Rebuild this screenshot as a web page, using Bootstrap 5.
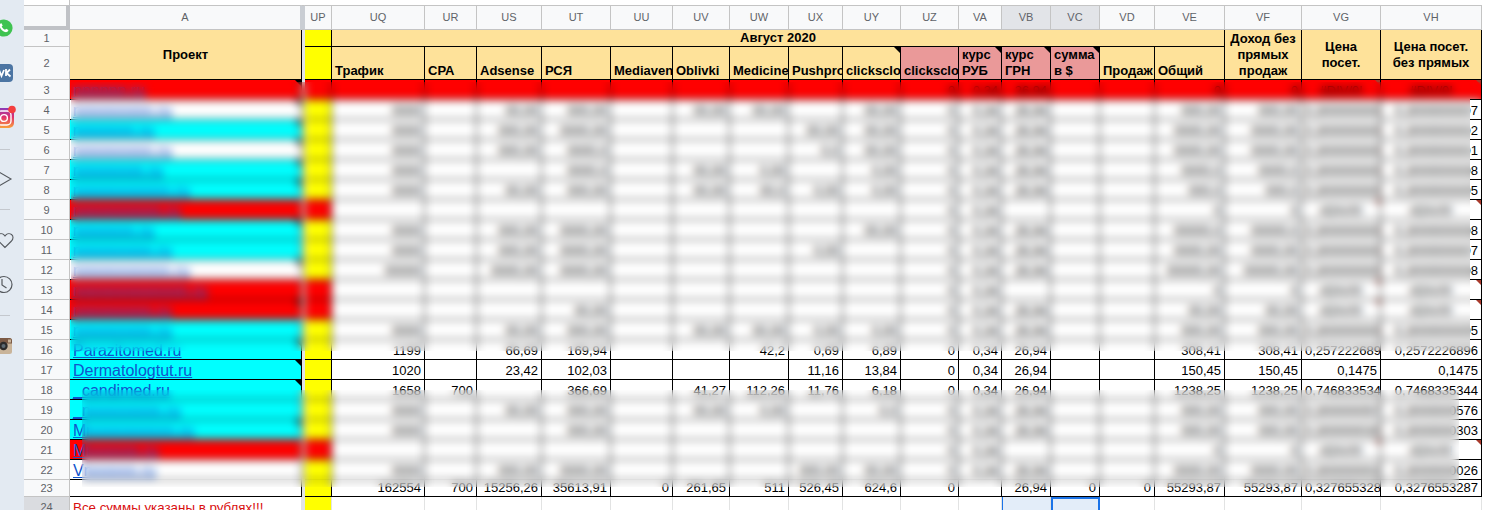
<!DOCTYPE html>
<html lang="ru">
<head>
<meta charset="utf-8">
<title>Таблица проектов</title>
<link href="https://cdn.jsdelivr.net/npm/bootstrap@5.3.0/dist/css/bootstrap.min.css" rel="stylesheet">
<style>
html,body{height:510px;overflow:hidden;background:#fff}
.stage{height:510px;width:1487px;overflow:hidden}
.rail{width:24px;background:#e3eaf2;flex:none}
.rail svg{display:block}
.tick{width:46px;height:5px;border-right:1px solid #c4c4c4}
.sheet{table-layout:fixed;width:1458px;border-collapse:separate;border-spacing:0;font:13px/16px "Liberation Sans",Arial,sans-serif;color:#000}
.sheet td,.sheet th{padding:0 3px;overflow:hidden;white-space:nowrap;vertical-align:bottom;position:relative}
.sheet thead th{height:25px;font:11px/23px "Liberation Sans",Arial,sans-serif;color:#5f6368;background:#f8f9fa;text-align:center;vertical-align:middle;border-top:1px solid #c4c4c4;border-bottom:1px solid #c4c4c4;border-right:1px solid #c4c4c4;padding:0}
.sheet thead th.corner{border-right:4px solid #c0c2c6;border-bottom:4px solid #c0c2c6}
.sheet thead th.colA{border-right:2px solid #c9cdd3}
.sheet thead th.frz{background:#c9cdd3;border-right-color:#c9cdd3}
.sheet thead th.pick{background:#e2e4e8}
.sheet tbody th{font:11px/16px "Liberation Sans",Arial,sans-serif;color:#5f6368;background:#f8f9fa;text-align:center;vertical-align:middle;border-right:1px solid #c4c4c4;border-bottom:1px solid #c4c4c4;padding:0}
.sheet tbody tr{height:20px}
.sheet tbody td{border-right:1px solid #000;border-bottom:1px solid #000;text-align:right;background:#fff}
.sheet tbody tr.r1{height:17px}
.sheet tbody tr.r2{height:33px}
.sheet tbody tr.r23{height:17px}
.sheet tbody td.hd{background:#fee29a;font-weight:700;text-align:left}
.sheet tbody td.ctr{text-align:center;vertical-align:middle;white-space:normal}
.sheet tbody td.pk{background:#ea9999;white-space:normal}
.sheet tbody td.pj{text-align:left;font-size:16px;background:#fff}
.sheet tbody td.pj a{color:#1155cc}
.sheet tbody tr .cy{background:#0ff}
.sheet tbody tr .rd{background:#f00}
.sheet tbody td.up{background:#ff0}
.sheet tbody td.up.rd{background:#f00}
.sheet tbody td.gp{background:#e1e3e7;border:0;padding:0}
.sheet tbody td.er{text-align:center}
.sheet tbody tr.rrow td:not(.gp){background:#f00}
.sheet tbody tr.last td{border-color:#e2e3e3;height:20px}
.sheet tbody tr.last td.up{background:#ff0}
.sheet tbody tr.last th{background:#dadce0}
.sheet tbody tr.last td.note{text-align:left;color:#d90f0f;background:#fff;font-size:13.33px}
.sheet tbody tr.last td.sel1{background:#e3edf9;border-left:1px solid #1a73e8}
.sheet tbody tr.last td.sel2{background:#e3edf9;border:2px solid #1a73e8}
.nt::after,.er::after{content:"";position:absolute;top:0;right:0;border-style:solid;border-width:0 6px 6px 0;border-color:transparent #000 transparent transparent}
.er::after{border-width:0 5px 5px 0;border-color:transparent #a83a2c transparent transparent}
.veil{position:absolute;backdrop-filter:blur(4px);-webkit-backdrop-filter:blur(4px)}
.veil-top{left:71px;top:82px;width:1410px;height:269px;clip-path:polygon(0 0,100% 0,100% 17px,1399px 17px,1399px 100%,0 100%)}
.veil-low{left:82px;top:390px;width:1377px;height:97px}
</style>
</head>
<body>
<div class="stage d-flex position-relative">
<aside class="rail">
<svg width="24" height="510" viewBox="0 0 24 510" aria-hidden="true">
<circle cx="4" cy="28" r="8.6" fill="#3fc351"/>
<path d="M0.6 23.5c-1 .6-1.4 2-.9 3.3.9 2.4 2.7 4.3 5.2 5.2 1.3.4 2.6 0 3.2-1l.3-.9-2.3-1.3-1 1c-1.500-.5-2.800-1.800-3.400-3.300l1-1-1.200-2.300z" fill="#fff"/>
<rect x="-6" y="64" width="19" height="18" rx="4" fill="#4c75a3"/>
<path d="M-1 70l2.500 6 2.500-6" fill="none" stroke="#fff" stroke-width="1.800"/>
<path d="M6 69v7M6.500 73l3.500-3.500M6.500 73l4 3.500" fill="none" stroke="#fff" stroke-width="1.800"/>
<defs><linearGradient id="ig" x1="0" y1="0" x2="0" y2="1"><stop offset="0" stop-color="#8a3ab9"/><stop offset=".45" stop-color="#e1306c"/><stop offset="1" stop-color="#f9a13b"/></linearGradient></defs>
<rect x="-6" y="108" width="20" height="20" rx="5" fill="url(#ig)"/>
<rect x="-3" y="111" width="14" height="14" rx="4" fill="none" stroke="#fff" stroke-width="1.400"/>
<circle cx="4" cy="118" r="3.400" fill="none" stroke="#fff" stroke-width="1.400"/>
<circle cx="12" cy="109.500" r="3.800" fill="#f43f3f"/>
<path d="M0 149.500h10M0 209.500h10M0 315.500h10" stroke="#c4c8ce"/>
<path d="M-1 172l12 7-12 7" fill="none" stroke="#55595e" stroke-width="1.100"/>
<path d="M5 247.500l-6.500-6.500c-2-2.200-2-5 0-6.500 2-1.400 4.800-.8 6.500 1.500 1.700-2.300 4.500-2.900 6.500-1.500 2 1.500 2 4.300 0 6.500z" fill="none" stroke="#55595e" stroke-width="1.100"/>
<circle cx="4" cy="284.500" r="8" fill="none" stroke="#55595e" stroke-width="1.200"/>
<path d="M2 279v6l4.500 3" fill="none" stroke="#55595e" stroke-width="1.200"/>
<rect x="-5" y="338" width="17" height="16" rx="2.500" fill="#c9b49a"/>
<path d="M-5 340.500a2.500 2.500 0 0 1 2.500-2.500h12a2.500 2.500 0 0 1 2.500 2.500v3h-17z" fill="#7b5a45"/>
<circle cx="3.500" cy="346" r="4.200" fill="#2b2b2b"/>
<circle cx="3.500" cy="346" r="2" fill="#5d6a72"/>
<rect x="8" y="339.500" width="3" height="3" fill="#c9b49a"/>
</svg>
</aside>
<main class="flex-grow-1">
<div class="tick"></div>
<table class="sheet">
<colgroup>
<col style="width:46px"><col style="width:232px"><col style="width:3px"><col style="width:27px"><col style="width:93px"><col style="width:52px"><col style="width:65px"><col style="width:69px"><col style="width:62px"><col style="width:57px"><col style="width:59px"><col style="width:54px"><col style="width:58px"><col style="width:58px"><col style="width:43px"><col style="width:49px"><col style="width:49px"><col style="width:55px"><col style="width:70px"><col style="width:77px"><col style="width:79px"><col style="width:101px">
</colgroup>
<thead><tr><th class="corner"></th><th class="colA">A</th><th class="frz"></th><th>UP</th><th>UQ</th><th>UR</th><th>US</th><th>UT</th><th>UU</th><th>UV</th><th>UW</th><th>UX</th><th>UY</th><th>UZ</th><th>VA</th><th class="pick">VB</th><th class="pick">VC</th><th>VD</th><th>VE</th><th>VF</th><th>VG</th><th>VH</th></tr></thead>
<tbody>
<tr class="r1"><th>1</th><td class="hd ctr" rowspan="2">Проект</td><td class="gp" rowspan="2"></td><td class="up"></td><td class="hd ctr" colspan="15">Август 2020</td><td class="hd ctr" rowspan="2">Доход без прямых продаж</td><td class="hd ctr" rowspan="2">Цена<br>посет.</td><td class="hd ctr" rowspan="2">Цена посет.<br>без прямых</td></tr>
<tr class="r2"><th>2</th><td class="up"></td><td class="hd">Трафик</td><td class="hd">CPA</td><td class="hd">Adsense</td><td class="hd">РСЯ</td><td class="hd">Mediaven</td><td class="hd">Oblivki</td><td class="hd">Medicine</td><td class="hd">Pushpro</td><td class="hd nt">clicksclo</td><td class="hd pk">clicksclo</td><td class="hd pk nt">курс РУБ</td><td class="hd pk nt">курс ГРН</td><td class="hd pk nt">сумма в $</td><td class="hd">Продаж</td><td class="hd">Общий</td></tr>
<tr class="rrow"><th>3</th><td class="pj nt"><a href="#">nnnnnn.ru</a></td><td class="gp"></td><td class="up rd"></td><td></td><td></td><td></td><td></td><td></td><td></td><td></td><td></td><td></td><td>0</td><td>0,34</td><td>26,94</td><td></td><td></td><td>0</td><td>0</td><td class="er">#DIV/0!</td><td class="er">#DIV/0!</td></tr>
<tr><th>4</th><td class="pj nt"><a href="#">nnnnnnnnn.ru</a></td><td class="gp"></td><td class="up"></td><td>0000</td><td></td><td>00,00</td><td>000,00</td><td></td><td>00,00</td><td>00,00</td><td></td><td>00,00</td><td>0</td><td>0,34</td><td>26,94</td><td></td><td></td><td>000,00</td><td>000,00</td><td>0,3000000000</td><td>0,3000000007</td></tr>
<tr><th>5</th><td class="pj cy nt"><a href="#">nnnnnnn.ru</a></td><td class="gp"></td><td class="up"></td><td>0000</td><td></td><td>000,00</td><td>0000,00</td><td></td><td></td><td></td><td>00,00</td><td>00,00</td><td>0</td><td>0,34</td><td>26,94</td><td></td><td></td><td>0000,00</td><td>0000,00</td><td>0,3000000000</td><td>0,3000000002</td></tr>
<tr><th>6</th><td class="pj nt"><a href="#">nnnnnnnnn.ru</a></td><td class="gp"></td><td class="up"></td><td>0000</td><td></td><td>000,00</td><td>0000,0</td><td></td><td></td><td></td><td>0,0</td><td>00,00</td><td>0</td><td>0,34</td><td>26,94</td><td></td><td></td><td>0000,00</td><td>0000,00</td><td>0,3000000000</td><td>0,3000000001</td></tr>
<tr><th>7</th><td class="pj cy nt"><a href="#">nnnnnnnn.ru</a></td><td class="gp"></td><td class="up"></td><td>0000</td><td></td><td></td><td>0000,0</td><td></td><td>00,00</td><td>0,00</td><td></td><td>0,00</td><td>0</td><td>0,34</td><td>26,94</td><td></td><td></td><td>0000,0</td><td>0000,0</td><td>0,3000000000</td><td>0,3000000008</td></tr>
<tr><th>8</th><td class="pj cy nt"><a href="#">nnnnnnnnnnn.ru</a></td><td class="gp"></td><td class="up"></td><td>0000</td><td></td><td>00,00</td><td>000,00</td><td></td><td>00,00</td><td>00,0</td><td>0,00</td><td>0,00</td><td>0</td><td>0,34</td><td>26,94</td><td></td><td></td><td>000,0</td><td>000,0</td><td>0,3000000000</td><td>0,3000000005</td></tr>
<tr><th>9</th><td class="pj rd"><a href="#">nnnnnnnnnn.ru</a></td><td class="gp"></td><td class="up rd"></td><td></td><td></td><td></td><td></td><td></td><td></td><td></td><td></td><td></td><td>0</td><td>0,34</td><td></td><td></td><td></td><td>0</td><td>0</td><td class="er">#DIV/0!</td><td class="er">#DIV/0!</td></tr>
<tr><th>10</th><td class="pj cy nt"><a href="#">nnnnnnn.ru</a></td><td class="gp"></td><td class="up"></td><td>0000</td><td></td><td>000,00</td><td>0000,00</td><td></td><td></td><td></td><td></td><td>00,00</td><td>0</td><td>0,34</td><td>26,94</td><td></td><td></td><td>00000,0</td><td>00000,0</td><td>0,3000000000</td><td>0,3000000008</td></tr>
<tr><th>11</th><td class="pj cy"><a href="#">nnnnnnnnn.ru</a></td><td class="gp"></td><td class="up"></td><td>0000</td><td></td><td>000,00</td><td>0000,00</td><td></td><td></td><td></td><td>0,00</td><td></td><td>0</td><td>0,34</td><td>26,94</td><td></td><td></td><td>0000,00</td><td>0000,00</td><td>0,3000000000</td><td>0,3000000007</td></tr>
<tr><th>12</th><td class="pj nt"><a href="#">nnnnnnnnnnn.ru</a></td><td class="gp"></td><td class="up"></td><td>00000</td><td></td><td>0000,00</td><td>0000,00</td><td></td><td></td><td></td><td></td><td></td><td>0</td><td>0,34</td><td>26,94</td><td></td><td></td><td>00000,00</td><td>00000,00</td><td>0,3000000000</td><td>0,3000000008</td></tr>
<tr><th>13</th><td class="pj rd"><a href="#">nnnnnnnnnnnnn.ru</a></td><td class="gp"></td><td class="up rd"></td><td></td><td></td><td></td><td></td><td></td><td></td><td></td><td></td><td></td><td>0</td><td>0,34</td><td></td><td></td><td></td><td>0</td><td>0</td><td class="er">#DIV/0!</td><td class="er">#DIV/0!</td></tr>
<tr><th>14</th><td class="pj rd nt"><a href="#">nnnnnnnnn.ru</a></td><td class="gp"></td><td class="up rd"></td><td></td><td></td><td></td><td>00,00</td><td></td><td></td><td></td><td></td><td></td><td>0</td><td>0,34</td><td>26,94</td><td></td><td></td><td>00,00</td><td>00,00</td><td class="er">#DIV/0!</td><td class="er">#DIV/0!</td></tr>
<tr><th>15</th><td class="pj cy"><a href="#">nnnnnnnnn.ru</a></td><td class="gp"></td><td class="up"></td><td>0000</td><td></td><td>00,00</td><td>000,00</td><td></td><td>00,00</td><td>00,00</td><td>0,00</td><td>0,00</td><td>0</td><td>0,34</td><td>26,94</td><td></td><td></td><td>000,00</td><td>000,00</td><td>0,3000000000</td><td>0,3000000005</td></tr>
<tr><th>16</th><td class="pj cy nt"><a href="#">Parazitomed.ru</a></td><td class="gp"></td><td class="up"></td><td>1199</td><td></td><td>66,69</td><td>169,94</td><td></td><td></td><td>42,2</td><td>0,69</td><td>6,89</td><td>0</td><td>0,34</td><td>26,94</td><td></td><td></td><td>308,41</td><td>308,41</td><td>0,2572226896</td><td>0,2572226896</td></tr>
<tr><th>17</th><td class="pj cy nt"><a href="#">Dermatologtut.ru</a></td><td class="gp"></td><td class="up"></td><td>1020</td><td></td><td>23,42</td><td>102,03</td><td></td><td></td><td></td><td>11,16</td><td>13,84</td><td>0</td><td>0,34</td><td>26,94</td><td></td><td></td><td>150,45</td><td>150,45</td><td>0,1475</td><td>0,1475</td></tr>
<tr><th>18</th><td class="pj cy nt"><a href="#">_candimed.ru</a></td><td class="gp"></td><td class="up"></td><td>1658</td><td>700</td><td></td><td>366,69</td><td></td><td>41,27</td><td>112,26</td><td>11,76</td><td>6,18</td><td>0</td><td>0,34</td><td>26,94</td><td></td><td></td><td>1238,25</td><td>1238,25</td><td>0,7468335344</td><td>0,7468335344</td></tr>
<tr><th>19</th><td class="pj cy"><a href="#">_nnnnnnnnn.ru</a></td><td class="gp"></td><td class="up"></td><td>0000</td><td></td><td>00,00</td><td>000,00</td><td></td><td>00,00</td><td>0,00</td><td></td><td>0,0</td><td>0</td><td>0,34</td><td>26,94</td><td></td><td></td><td>000,00</td><td>000,00</td><td>0,3000000576</td><td>0,3000000576</td></tr>
<tr><th>20</th><td class="pj cy nt"><a href="#">Mnnnnnnnnnn.ru</a></td><td class="gp"></td><td class="up"></td><td>0000</td><td></td><td></td><td>000,00</td><td></td><td></td><td></td><td></td><td></td><td>0</td><td>0,34</td><td>26,94</td><td></td><td></td><td>000,00</td><td>000,00</td><td>0,3000000303</td><td>0,3000000303</td></tr>
<tr><th>21</th><td class="pj rd"><a href="#">Mnnnnnn.ru</a></td><td class="gp"></td><td class="up rd"></td><td></td><td></td><td></td><td></td><td></td><td></td><td></td><td></td><td></td><td>0</td><td>0,34</td><td></td><td></td><td></td><td>0</td><td>0</td><td class="er">#DIV/0!</td><td class="er">#DIV/0!</td></tr>
<tr><th>22</th><td class="pj"><a href="#">Vnnnnnn.ru</a></td><td class="gp"></td><td class="up"></td><td>0000</td><td></td><td>000,00</td><td>0000,00</td><td></td><td></td><td></td><td>000,00</td><td>00,00</td><td>0</td><td>0,34</td><td>26,94</td><td></td><td></td><td>0000,00</td><td>0000,00</td><td>0,3000000026</td><td>0,3000000026</td></tr>
<tr class="r23"><th>23</th><td class="pj"></td><td class="gp"></td><td class="up"></td><td>162554</td><td>700</td><td>15256,26</td><td>35613,91</td><td>0</td><td>261,65</td><td>511</td><td>526,45</td><td>624,6</td><td>0</td><td></td><td>26,94</td><td>0</td><td>0</td><td>55293,87</td><td>55293,87</td><td>0,3276553287</td><td>0,3276553287</td></tr>
<tr class="last"><th>24</th><td class="note">Все суммы указаны в рублях!!!</td><td class="gp"></td><td class="up"></td><td></td><td></td><td></td><td></td><td></td><td></td><td></td><td></td><td></td><td></td><td></td><td class="sel1"></td><td class="sel2"></td><td></td><td></td><td></td><td></td><td></td></tr>
</tbody>
</table>
</main>
<div class="veil veil-top"></div>
<div class="veil veil-low"></div>
</div>
<script src="https://cdn.jsdelivr.net/npm/bootstrap@5.3.0/dist/js/bootstrap.bundle.min.js"></script>
</body>
</html>
